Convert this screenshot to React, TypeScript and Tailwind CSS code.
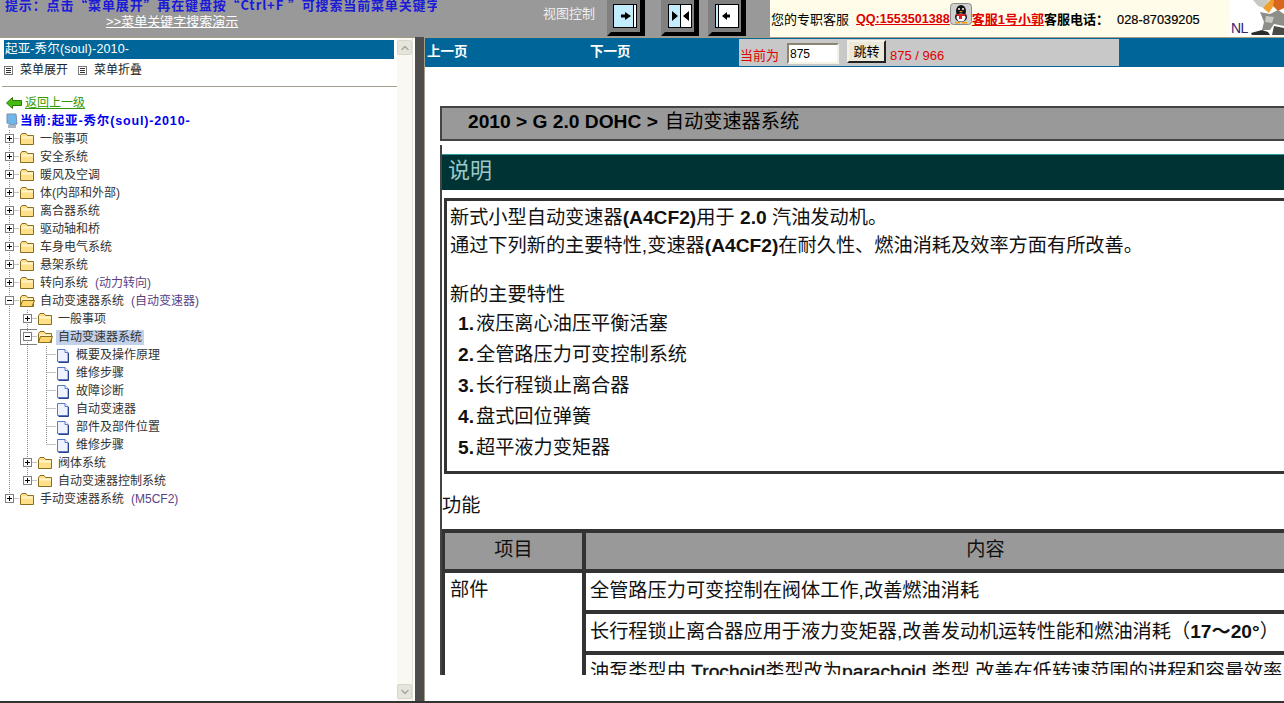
import { ChevronDown, ChevronUp } from 'lucide-react'

type TreeItem = {
  label: string
  suffix?: string
  level: 0 | 1 | 2
  kind: 'plus' | 'minus' | 'leaf'
  selected?: boolean
  last?: boolean
}

const tree: TreeItem[] = [
  { label: '一般事项', level: 0, kind: 'plus' },
  { label: '安全系统', level: 0, kind: 'plus' },
  { label: '暖风及空调', level: 0, kind: 'plus' },
  { label: '体(内部和外部)', level: 0, kind: 'plus' },
  { label: '离合器系统', level: 0, kind: 'plus' },
  { label: '驱动轴和桥', level: 0, kind: 'plus' },
  { label: '车身电气系统', level: 0, kind: 'plus' },
  { label: '悬架系统', level: 0, kind: 'plus' },
  { label: '转向系统', suffix: '(动力转向)', level: 0, kind: 'plus' },
  { label: '自动变速器系统', suffix: '(自动变速器)', level: 0, kind: 'minus' },
  { label: '一般事项', level: 1, kind: 'plus' },
  { label: '自动变速器系统', level: 1, kind: 'minus', selected: true },
  { label: '概要及操作原理', level: 2, kind: 'leaf' },
  { label: '维修步骤', level: 2, kind: 'leaf' },
  { label: '故障诊断', level: 2, kind: 'leaf' },
  { label: '自动变速器', level: 2, kind: 'leaf' },
  { label: '部件及部件位置', level: 2, kind: 'leaf' },
  { label: '维修步骤', level: 2, kind: 'leaf', last: true },
  { label: '阀体系统', level: 1, kind: 'plus' },
  { label: '自动变速器控制系统', level: 1, kind: 'plus', last: true },
  { label: '手动变速器系统', suffix: '(M5CF2)', level: 0, kind: 'plus', last: true },
]

const steps = ['液压离心油压平衡活塞', '全管路压力可变控制系统', '长行程锁止离合器', '盘式回位弹簧', '超平液力变矩器']

function Box({ x, minus, focus }: { x: number; minus?: boolean; focus?: boolean }) {
  return (
    <g>
      {focus && <rect x={x - 5.5} y={1.5} width={17} height={15} fill="none" stroke="#000" strokeDasharray="1 1" />}
      <rect x={x - 2.5} y={4.5} width={8} height={8} fill="#fff" stroke="#808080" />
      <path d={`M${x - 1} 8.5h5`} stroke="#000" />
      {!minus && <path d={`M${x + 1.5} 6v5`} stroke="#000" />}
    </g>
  )
}

function Guides({ item }: { item: TreeItem }) {
  const dot = { stroke: '#888', strokeDasharray: '1 1', fill: 'none' }
  return (
    <svg width={item.level === 0 ? 19 : item.level === 1 ? 37 : 56} height={18} className="shrink-0">
      <path d={item.level === 0 && item.last ? 'M9.5 0v8' : 'M9.5 0v18'} {...dot} />
      {item.level === 0 && <path d="M9.5 8.5h9" {...dot} />}
      {item.level === 0 && <Box x={8} minus={item.kind === 'minus'} />}
      {item.level >= 1 && <path d={item.last && item.level === 1 ? 'M27.5 0v8' : 'M27.5 0v18'} {...dot} />}
      {item.level === 1 && <path d="M27.5 8.5h9" {...dot} />}
      {item.level === 1 && <Box x={26} minus={item.kind === 'minus'} focus={item.selected} />}
      {item.level === 2 && <path d={item.last ? 'M46.5 0v8M46.5 8.5h9' : 'M46.5 0v18M46.5 8.5h9'} {...dot} />}
    </svg>
  )
}

function Folder({ open }: { open: boolean }) {
  return (
    <svg width={16} height={14} viewBox="0 0 16 14" className="shrink-0">
      <path d="M1.5 12.5v-9l1.5-2h4l1.5 2h6v9z" fill="#ffe08a" stroke="#8a6d1e" />
      <path d="M2.5 4.5h11.500v2h-11.500z" fill="#fff6cc" />
      {open && <path d="M1.500 12.500l2-6h12l-2.500 6z" fill="#ffd66b" stroke="#8a6d1e" />}
    </svg>
  )
}

function FileIcon() {
  return (
    <svg width={14} height={15} viewBox="0 0 14 15" className="shrink-0">
      <path d="M1.500 1.500h7.500l3 3v9h-10.500z" fill="#eef3ff" stroke="#5b78c8" />
      <path d="M12.500 5v9.500h-10" fill="none" stroke="#26408c" />
      <path d="M9 1.500v3h3" fill="#fff" stroke="#5b78c8" />
    </svg>
  )
}

function ViewButton({ inner, divider, arrows }: { inner: number; divider: number; arrows: string }) {
  return (
    <svg width={38} height={36} viewBox="0 0 38 36" className="shrink-0">
      <path d="M0 0h33v32h-29l-4 4z" fill="#808080" />
      <path d="M33 0h5v36h-38l4-4h29z" fill="#000" />
      <rect x={inner + 0.5} y={4.5} width={23} height={23} fill="#fff" stroke="#000" />
      <rect x={inner + 1} y={5} width={divider - inner - 1} height={22} fill="#c4ecff" />
      <path d={`M${divider + 0.5} 5v22`} stroke="#000" />
      <path d={arrows} fill="#000" />
    </svg>
  )
}

function MenuIcon() {
  return (
    <svg width={9} height={9} viewBox="0 0 9 9" className="shrink-0">
      <rect x={0.5} y={0.5} width={8} height={8} fill="#fff" stroke="#777" />
      <path d="M2 2.500h5M2 4.500h5M2 6.500h5" stroke="#333" />
    </svg>
  )
}

function Penguin() {
  return (
    <svg width={22} height={22} viewBox="0 0 22 22" className="shrink-0">
      <rect x={0.5} y={0.5} width={21} height={21} rx={3} fill="#d0d0d0" stroke="#8a8a8a" />
      <ellipse cx={11} cy={8} rx={5} ry={6} fill="#111" />
      <ellipse cx={11} cy={14} rx={6} ry={5} fill="#111" />
      <ellipse cx={11} cy={14.500} rx={4.500} ry={4} fill="#fff" />
      <circle cx={9} cy={6} r={1} fill="#fff" />
      <circle cx={13} cy={6} r={1} fill="#fff" />
      <path d="M9 8h4l-2 1.500z" fill="#f5a000" />
      <path d="M6 11h10l-1 2h-3v3h-3v-3h-2z" fill="#d8202a" />
      <path d="M5 19h5v1.500h-5zM12 19h5v1.500h-5z" fill="#f5a000" />
    </svg>
  )
}

function Robot() {
  return (
    <svg width={36} height={36} viewBox="0 0 36 36" className="shrink-0">
      <path d="M5 0l5 6 6 2 5-8z" fill="#c9c9c4" />
      <path d="M15 8l7-8h7l-8 13z" fill="#f0a030" />
      <path d="M26 0h10v8l-6 3-5-5z" fill="#d9661f" />
      <path d="M12 12l10 2 8-4 6 4v12l-10-2-4 6h-8l2-8z" fill="#8e8e88" />
      <path d="M18 16l8 1-2 6-7-1z" fill="#c9c9c4" />
      <path d="M3 33l11-3 6 2 2 3h-18z" fill="#2c2c2c" />
      <path d="M26 26l10 2v7h-12z" fill="#4a4a46" />
    </svg>
  )
}

function TreeRow({ item }: { item: TreeItem }) {
  return (
    <div className="flex h-[18px] items-center whitespace-nowrap">
      <Guides item={item} />
      {item.kind === 'leaf' ? <FileIcon /> : <Folder open={item.kind === 'minus'} />}
      {item.selected ? (
        <span className="ml-[3px] bg-[#c2d2ea] px-[2px] leading-[15px] text-[#333]">{item.label}</span>
      ) : (
        <span className={item.kind === 'leaf' ? 'ml-[6px] text-[#333]' : 'ml-[5px] text-[#333]'}>
          {item.label}
          {item.suffix && <span className="ml-[7px] text-[#5a3f86]">{item.suffix}</span>}
        </span>
      )}
    </div>
  )
}

function L({ children }: { children: string }) {
  return <span className="font-bold">{children}</span>
}

// latin words of the scan that look heavy but keep regular widths
function Dark({ children }: { children: string }) {
  return <span className="[-webkit-text-stroke:0.4px_#111]">{children}</span>
}

export default function App() {
  return (
    <div className='flex h-[703px] w-[1284px] flex-col overflow-hidden bg-white font-["Liberation_Sans","Noto_Sans_CJK_SC",sans-serif] text-[12px]'>
      {/* top bar */}
      <header className="flex h-[37px] shrink-0 bg-[#999999]">
        <div className="w-[540px] shrink-0 overflow-hidden pl-[5px]">
          <p className='-mt-[4px] h-[17px] w-[432px] overflow-hidden font-["Noto_Sans_CJK_SC",sans-serif] text-[13px] leading-[17px] font-bold tracking-[0.85px] whitespace-nowrap text-[#1a1ad8]'>
            提示：点击“菜单展开”再在键盘按“Ctrl+F ”可搜索当前菜单关键字
          </p>
          <a className="ml-[101px] block w-fit text-[13px] leading-[18px] text-white underline">&gt;&gt;菜单关键字搜索演示</a>
        </div>
        <div className="flex w-[230px] shrink-0">
          <span className="mt-[5px] ml-[3px] w-[64px] text-[13px] leading-[18px] text-[#eeeeee]">视图控制</span>
          <ViewButton inner={6} divider={26} arrows="M18 12l6 4-6 4zM14 14.500h4v3h-4z" />
          <div className="ml-[16px]">
            <ViewButton inner={7} divider={19} arrows="M11 11l6 5-6 5zM22 16l6-5v10z" />
          </div>
          <div className="ml-[9px]">
            <ViewButton inner={7} divider={10} arrows="M14 16l5-4v8zM19 14.500h3v3h-3z" />
          </div>
        </div>
        <div className="flex min-w-0 flex-1 items-start bg-[#fffde9] text-[13px] leading-[39px] whitespace-nowrap">
          <span className="ml-[1px] text-black">您的专职客服</span>
          <span className="ml-[7px] text-[12.600px] font-bold text-[#e00000] underline">QQ:1553501388</span>
          <div className="mt-[3px]">
            <Penguin />
          </div>
          <span className="font-bold text-[#e00000] underline">客服1号小郭</span>
          <span className="font-bold text-black">客服电话：</span>
          <span className="ml-[8px] text-[12.800px] text-black [-webkit-text-stroke:0.2px_#000]">028-87039205</span>
          <div className="ml-auto flex h-[36px] w-[54px] shrink-0 bg-white pl-[1px]">
            <span className="mt-[19px] w-[17px] text-[14px] leading-[18px] tracking-[-0.5px] text-[#33206e]">NL</span>
            <Robot />
          </div>
        </div>
      </header>

      {/* panels */}
      <div className="flex min-h-0 flex-1">
        <aside className="flex w-[415px] shrink-0 border-t border-[#a39d85]">
          <div className="w-[397px] shrink-0 overflow-hidden pl-[4px]">
            <div className="mt-[2px] mr-[3px] flex h-[19px] items-center bg-[#006699] pl-[1px] text-[12.500px] tracking-[0.15px] text-white">起亚-秀尔(soul)-2010-</div>
            <div className="mt-[2px] flex h-[18px] items-center text-[#222]">
              <MenuIcon />
              <span className="ml-[7px]">菜单展开</span>
              <div className="ml-[10px]">
                <MenuIcon />
              </div>
              <span className="ml-[7px]">菜单折叠</span>
            </div>
            <div className="-ml-[2px] mt-[7px] h-px bg-[#a5a08c]" />
            <div className="mt-[7px] flex h-[18px] items-center pl-[2px]">
              <svg width={16} height={12} viewBox="0 0 16 12" className="shrink-0">
                <path d="M0.500 6l6-5.500v3h9v5h-9v3z" fill="#44bb11" stroke="#2a7a00" />
              </svg>
              <a className="ml-[3px] text-[#339900] underline">返回上一级</a>
            </div>
            <div className="flex h-[18px] items-center pl-px">
              <svg width={13} height={16} viewBox="0 0 13 16" className="shrink-0">
                <path d="M2 1h9l1 10-6 1-4-2z" fill="#6fb6ea" stroke="#7a8ea8" />
                <path d="M3 12h8v3h-8z" fill="#a9b4c4" />
              </svg>
              <span className="ml-[2px] text-[12.500px] font-bold tracking-[0.85px] text-[#0000ee]">当前:起亚-秀尔(soul)-2010-</span>
            </div>
            <div className="-ml-[4px]">
              {tree.map((item, i) => (
                <TreeRow key={i} item={item} />
              ))}
            </div>
          </div>
          {/* scrollbar */}
          <div className="flex w-[16px] shrink-0 flex-col justify-between border-r border-[#e4e2d4] bg-[#faf9f1] pt-[2px] pb-[2px]">
            <div className="flex h-[15px] w-[15px] items-center justify-center rounded-[2px] border border-[#d8d6c8] bg-[#e6e5dc]">
              <ChevronUp size={12} strokeWidth={3} className="text-[#a8a8a0]" />
            </div>
            <div className="flex h-[15px] w-[15px] items-center justify-center rounded-[2px] border border-[#d8d6c8] bg-[#e6e5dc]">
              <ChevronDown size={12} strokeWidth={3} className="text-[#a8a8a0]" />
            </div>
          </div>
        </aside>
        <div className="w-[9px] shrink-0 bg-[#4d4d4d]" />

        <main className="flex min-w-0 flex-1 flex-col overflow-hidden border-t border-l border-[#a39d85]">
          <nav className="flex h-[29px] shrink-0 bg-[#006699] text-[13.500px] font-bold text-white">
            <span className="mt-[5px] ml-[2px] w-[163px] leading-[18px]">上一页</span>
            <span className="mt-[5px] w-[149px] leading-[18px]">下一页</span>
            <div className="mt-px flex h-[27px] w-[380px] items-start bg-[#c8c8c8] pl-px text-[13px] font-normal text-[#e00000]">
              <span className="mt-[8px] w-[47px] leading-[18px]">当前为</span>
              <input readOnly value="875" className="mt-[4px] h-[21px] w-[52px] border-2 border-t-[#8a8570] border-r-[#f4f2e6] border-b-[#f4f2e6] border-l-[#8a8570] bg-white pl-px text-[12px] text-black outline-none" />
              <button className="mt-[1px] ml-[8px] h-[23px] w-[39px] border-2 border-t-[#f4f2e6] border-r-[#222] border-b-[#222] border-l-[#f4f2e6] bg-[#ece9d8] leading-[16px] text-black">跳转</button>
              <span className="mt-[8px] ml-[4px] leading-[18px]">875 / 966</span>
            </div>
          </nav>

          {/* scanned manual page, cut off at the frame's bottom */}
          <div className="h-[608px] w-[960px] shrink-0 overflow-hidden pt-[39px] pl-[15px] text-[19.200px] text-[#111]">
            <div className="flex h-[35px] items-center border-2 border-[#444] bg-[#999999] pb-[2px] pl-[26px] text-black">
              <L>2010 &gt; G 2.0 DOHC &gt;</L>
              <span className="ml-[7px]">自动变速器系统</span>
            </div>
            <section className="mt-[4px] border-l-2 border-[#444] pt-[9px]">
              <div className="flex h-[36px] items-center border-t border-[#2a9a9a] bg-[#003333] pb-[5px] pl-[6px] text-[22px] text-[#9cc8c8]">说明</div>
              <div className="mt-[8px] ml-[2px] border-t-[3px] border-b-[3px] border-l-[3px] border-[#333] pt-[3px] pb-[8px] pl-[3px]">
                <div className="leading-[28px]">
                  <p>
                    新式小型自动变速器<L>(A4CF2)</L>用于 <L>2.0</L> 汽油发动机。
                  </p>
                  <p>
                    通过下列新的主要特性,变速器<L>(A4CF2)</L>在耐久性、燃油消耗及效率方面有所改善。
                  </p>
                  <p className="mt-[21px]">新的主要特性</p>
                </div>
                <ol className="-mt-px pl-[8px] leading-[31px]">
                  {steps.map((step, i) => (
                    <li key={i} className="flex">
                      <span className="w-[18px] font-bold">{i + 1}.</span>
                      {step}
                    </li>
                  ))}
                </ol>
              </div>
              <p className="mt-[18px] leading-[28px]">功能</p>
              <div className="mt-[9px] border-t-4 border-l-[3px] border-[#333] bg-[#333]">
                <div className="grid grid-cols-[137px_1fr] gap-[4px]">
                  <div className="flex h-[36px] items-center justify-center bg-[#999999] pb-px">项目</div>
                  <div className="flex h-[36px] items-center justify-center bg-[#999999] pb-px">内容</div>
                  <div className="row-span-3 bg-white pt-[3px] pl-[5px] leading-[28px]">部件</div>
                  <div className="h-[37px] bg-white pt-[4px] pl-[4px] leading-[28px]">全管路压力可变控制在阀体工作,改善燃油消耗</div>
                  <div className="h-[37px] bg-white pt-[4px] pl-[4px] leading-[28px]">
                    长行程锁止离合器应用于液力变矩器,改善发动机运转性能和燃油消耗（<L>17～20°</L>）
                  </div>
                  <div className="h-[37px] bg-white pt-[3px] pl-[4px] leading-[28px]">
                    油泵类型由 <Dark>Trochoid</Dark>类型改为<Dark>parachoid</Dark> 类型,改善在低转速范围的进程和容量效率
                  </div>
                </div>
              </div>
            </section>
          </div>
        </main>
      </div>
      <div className="h-[2px] shrink-0 bg-[#333]" />
    </div>
  )
}
